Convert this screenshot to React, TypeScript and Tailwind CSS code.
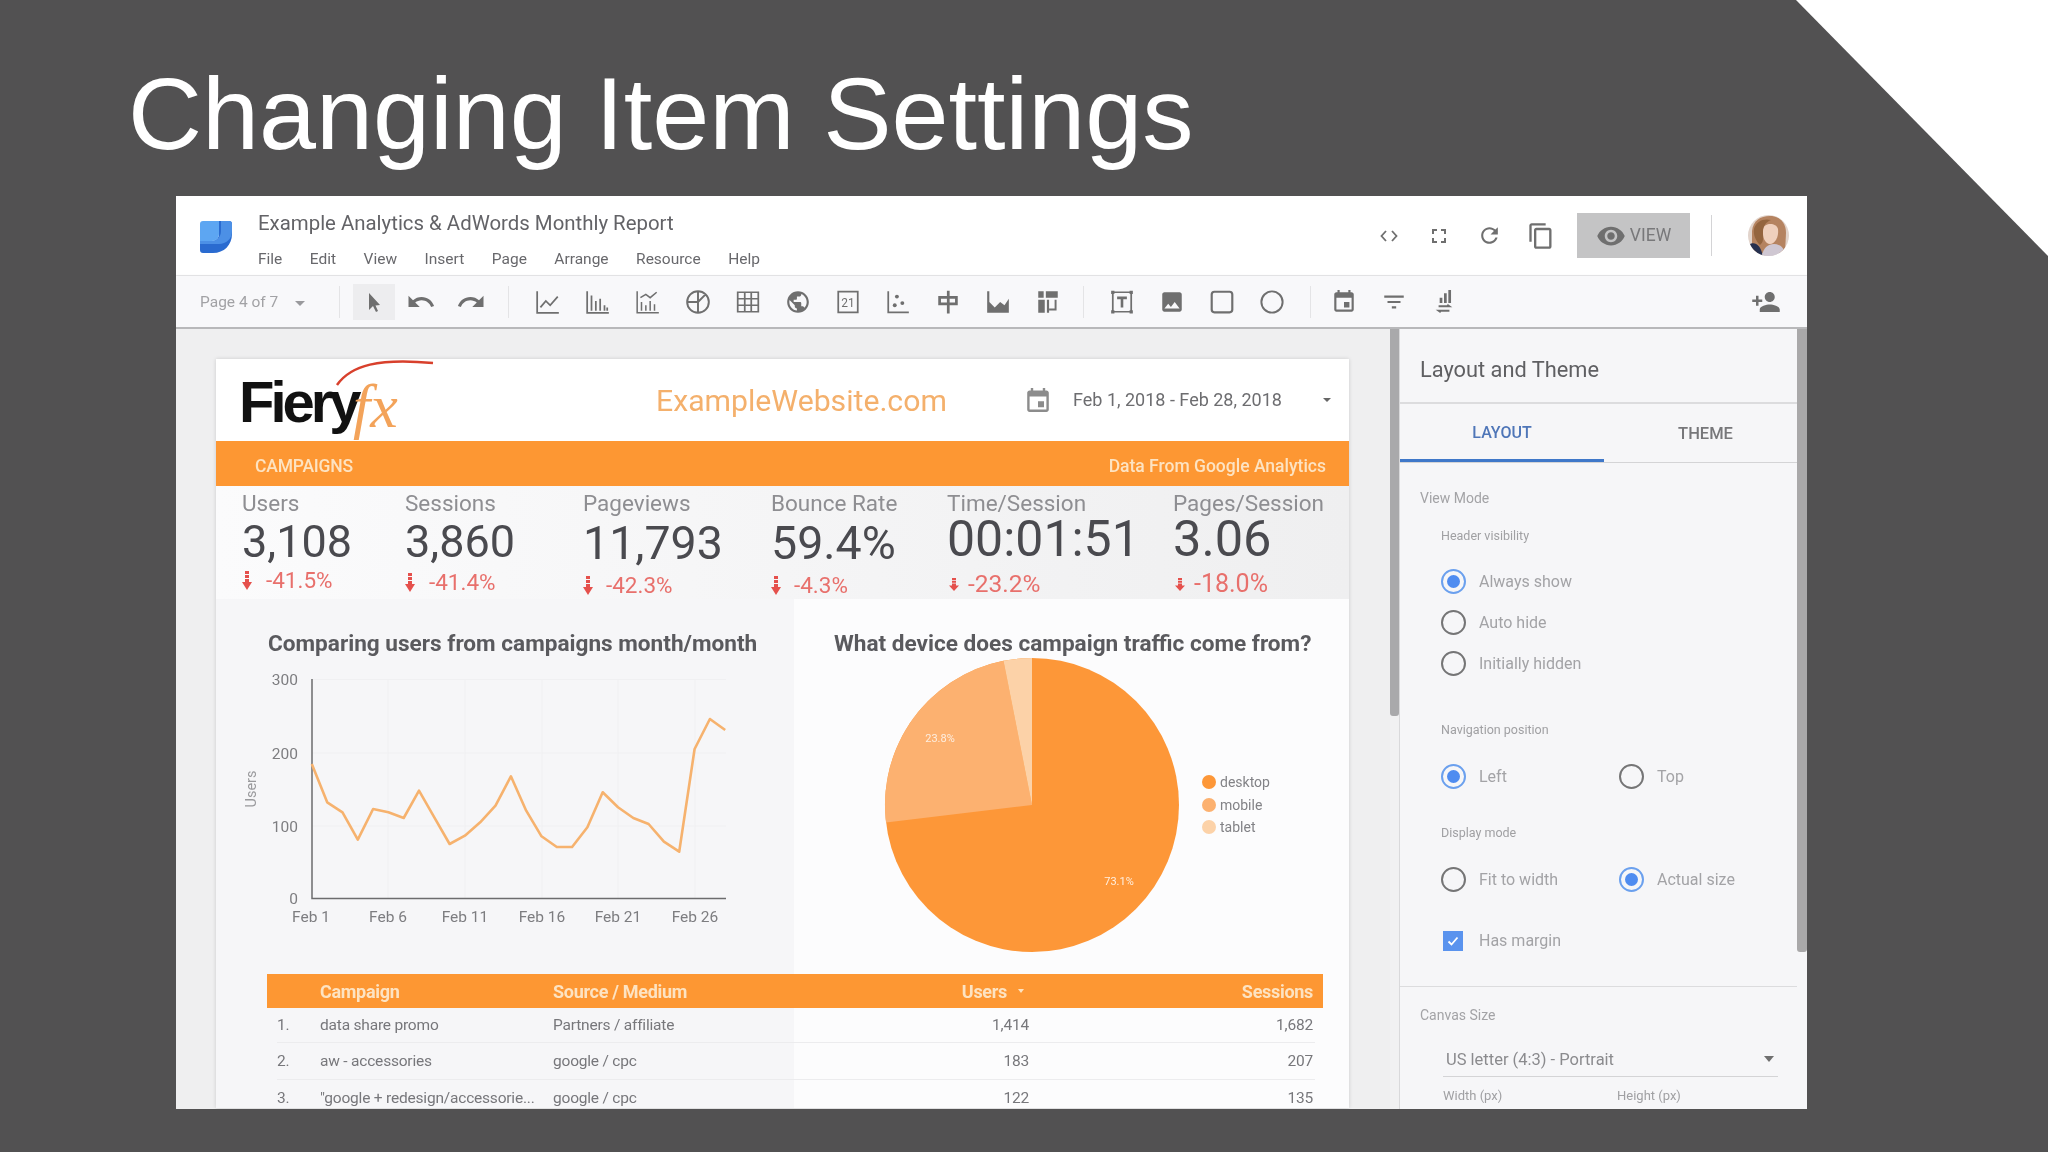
import type { ReactNode } from 'react';

const linePoints = [
  [240, 435], [280, 550], [320, 580], [360, 662], [400, 570], [440, 580], [480, 597], [520, 515],
  [560, 595], [600, 675], [640, 650], [680, 610], [720, 560], [760, 472], [800, 575], [840, 652],
  [880, 684], [920, 684], [960, 625], [1000, 520], [1040, 565], [1080, 597], [1120, 615], [1160, 668],
  [1200, 698], [1240, 390], [1280, 300], [1320, 333],
]
  .map(([x, y]) => `${(4 + x / 2.613).toFixed(1)},${(y / 3 - 39).toFixed(1)}`)
  .join(' ');

function Icon({ children, size = 26 }: { children: ReactNode; size?: number }) {
  return (
    <svg width={size} height={size} viewBox="0 0 24 24" fill="#6f6f6f" stroke="none">
      {children}
    </svg>
  );
}

function Stroke({ d, width = 1.6 }: { d: string; width?: number }) {
  return <path d={d} fill="none" stroke="#6f6f6f" strokeWidth={width} />;
}

function ToolSlot({ children }: { children: ReactNode }) {
  return <div className="flex h-[36px] w-[50px] shrink-0 items-center justify-center">{children}</div>;
}

function ToolDivider() {
  return <div className="h-[32px] w-px shrink-0 bg-[#e4e4e6]" />;
}

function Logo() {
  return (
    <svg width="34" height="34" viewBox="0 0 34 34">
      <path d="M20 1h10a3 3 0 0 1 3 3v10c0 11-8 19-19 19H4a3 3 0 0 1-3-3v-9h12c4 0 7-3 7-7z" fill="#2a6bd0" />
      <path d="M22 1h8a3 3 0 0 1 3 3v7c0 8-6 13-13 13H1v-3h11c6 0 10-4 10-10z" fill="#4c90e6" />
      <path d="M4 1h16v13c0 4-3 7-7 7H1V4a3 3 0 0 1 3-3z" fill="#5da6f2" />
    </svg>
  );
}

function Avatar() {
  return (
    <svg width="41" height="41" viewBox="0 0 41 41">
      <clipPath id="avatar-clip">
        <circle cx="20.5" cy="20.5" r="20.5" />
      </clipPath>
      <g clipPath="url(#avatar-clip)">
        <rect width="41" height="41" fill="#e2d4cc" />
        <path d="M4 38V16C5 6 12 1 22 1c10 0 16 7 16 17l-1 20z" fill="#b58360" />
        <path d="M0 30c6-4 12-2 15 11H0z" fill="#26304f" />
        <path d="M15 14c1-6 13-7 15 0 1 8-3 15-8 15s-8-7-7-15z" fill="#efd0bd" />
        <path d="M14 41c1-8 6-12 12-12s11 4 11 12z" fill="#cfc7d2" />
        <path d="M6 14c2-8 10-11 17-9-5 2-8 6-8 12 0 6 1 10-3 13-4-4-7-10-6-16z" fill="#94653f" />
      </g>
    </svg>
  );
}

function DownArrow({ small = false }: { small?: boolean }) {
  return (
    <svg width="10" height={small ? 13 : 19} viewBox="0 0 10 19" preserveAspectRatio="none" className="shrink-0">
      <path d="M3 0h4v3H3zM3 4h4v3H3zM3 8h4v3h3l-5 8-5-8h3z" fill="#e5504c" />
    </svg>
  );
}

const kpis = [
  { label: 'Users', value: '3,108', delta: '-41.5%', box: 'w-[163px]', val: 'text-[45px] leading-[50px] mt-[1px]', del: 'mt-[1px] gap-[14px] text-[22.5px]', small: false },
  { label: 'Sessions', value: '3,860', delta: '-41.4%', box: 'w-[178px]', val: 'text-[45px] leading-[50px] mt-[1px]', del: 'mt-[3px] gap-[14px] text-[22.5px]', small: false },
  { label: 'Pageviews', value: '11,793', delta: '-42.3%', box: 'w-[188px]', val: 'text-[46.5px] leading-[50px] mt-[2px]', del: 'mt-[5px] gap-[13px] text-[22.5px]', small: false },
  { label: 'Bounce Rate', value: '59.4%', delta: '-4.3%', box: 'w-[176px]', val: 'text-[46.5px] leading-[50px] mt-[2px]', del: 'mt-[5px] gap-[13px] text-[22.5px]', small: false },
  { label: 'Time/Session', value: '00:01:51', delta: '-23.2%', box: 'w-[226px]', val: 'text-[50px] leading-[50px] -mt-[2px]', del: 'mt-[8px] gap-[9px] text-[24.5px] pl-[2px]', small: true },
  { label: 'Pages/Session', value: '3.06', delta: '-18.0%', box: 'w-[170px]', val: 'text-[50.5px] leading-[50px] -mt-[2px]', del: 'mt-[8px] gap-[9px] text-[25px] pl-[2px]', small: true },
];

const rows = [
  ['1.', 'data share promo', 'Partners / affiliate', '1,414', '1,682'],
  ['2.', 'aw - accessories', 'google / cpc', '183', '207'],
  ['3.', '"google + redesign/accessorie...', 'google / cpc', '122', '135'],
];

function Kpi({ k }: { k: (typeof kpis)[number] }) {
  return (
    <div className={`flex shrink-0 flex-col ${k.box}`}>
      <div className="text-[22.5px] leading-[26px] text-[#8e8e92]">{k.label}</div>
      <div className={`text-[#4a4a4f] ${k.val}`}>{k.value}</div>
      <div className={`flex items-center leading-[24px] text-[#e8706c] ${k.del}`}>
        <DownArrow small={k.small} />
        {k.delta}
      </div>
    </div>
  );
}

function Report() {
  return (
    <div className="h-[749px] w-[1133px] shrink-0 overflow-hidden bg-white shadow-[0_0_4px_rgba(0,0,0,0.15)]">
      <div className="flex h-[82px] items-center">
        <div className="relative mt-[3px] ml-[23px] w-[417px]">
          <span className="font-[family-name:'Liberation_Sans',Arial,sans-serif] text-[58px] leading-[60px] font-bold tracking-[-4px] text-[#111]">
            Fiery
          </span>
          <span className="absolute top-[4px] left-[114px] font-[family-name:'Liberation_Serif',serif] text-[62px] leading-[60px] text-[#f3a35a] italic">
            fx
          </span>
          <svg width="110" height="30" viewBox="0 0 110 30" className="absolute -top-[15px] left-[96px]">
            <path d="M2 28C16 8 44 1 98 6" fill="none" stroke="#d8402c" strokeWidth="2.5" />
          </svg>
        </div>
        <div className="mt-[2px] w-[370px] text-[30.2px] leading-[40px] text-[#f4b06c]">ExampleWebsite.com</div>
        <svg width="22" height="24" viewBox="3 1 18 20" className="ml-[1px] shrink-0">
          <path
            d="M17 12h-5v5h5v-5zM16 1v2H8V1H6v2H5c-1.11 0-1.99.9-1.99 2L3 19c0 1.1.89 2 2 2h14c1.1 0 2-.9 2-2V5c0-1.1-.9-2-2-2h-1V1h-2zm3 18H5V8h14v11z"
            fill="#8c8c8c"
          />
        </svg>
        <div className="ml-[24px] w-[250px] text-[18px] leading-[24px] text-[#6d6d70]">Feb 1, 2018 - Feb 28, 2018</div>
        <div className="h-0 w-0 border-x-[4px] border-t-[4px] border-x-transparent border-t-[#666]" />
      </div>
      <div className="flex h-[45px] items-center justify-between bg-[#fd9733] pt-[5px] pr-[23px] pl-[39px] text-[17.5px] font-medium text-[#fde3c2]">
        <span className="tracking-[-0.2px]">CAMPAIGNS</span>
        <span>Data From Google Analytics</span>
      </div>
      <div className="flex h-[113px] bg-[linear-gradient(to_right,#fbfbfc,#efeff0)] pt-[4px] pl-[26px]">
        {kpis.map((k) => (
          <Kpi key={k.label} k={k} />
        ))}
      </div>
      <div className="bg-[linear-gradient(to_right,#f6f6f8_578px,#fcfcfd_578px)]">
        <div className="flex h-[375px]">
          <div className="w-[578px] shrink-0">
            <div className="h-[59px] pt-[31px] pl-[52px] text-[22.6px] leading-[28px] font-bold text-[#5a5a5e]">
              Comparing users from campaigns month/month
            </div>
            <svg width="578" height="316" viewBox="0 0 578 316" fontFamily="Roboto, sans-serif" fontSize="15.5" fill="#7d7d80">
              <g stroke="#f0f0f2" strokeWidth="1">
                <path d="M96 21.5H510M96 95H510M96 168H510" />
                <path d="M172 21V240M249 21V240M326 21V240M402 21V240M479 21V240" />
              </g>
              <path d="M96 21V240.500H510" fill="none" stroke="#6c6c6e" strokeWidth="1.5" />
              <polyline points={linePoints} fill="none" stroke="#f6b26e" strokeWidth="2.6" strokeLinejoin="round" />
              <g textAnchor="end">
                <text x="82" y="27">300</text>
                <text x="82" y="101">200</text>
                <text x="82" y="174">100</text>
                <text x="82" y="246">0</text>
              </g>
              <g textAnchor="middle">
                <text x="95" y="264">Feb 1</text>
                <text x="172" y="264">Feb 6</text>
                <text x="249" y="264">Feb 11</text>
                <text x="326" y="264">Feb 16</text>
                <text x="402" y="264">Feb 21</text>
                <text x="479" y="264">Feb 26</text>
                <text transform="translate(40 131) rotate(-90)" fontSize="14.5" fill="#9a9a9d">Users</text>
              </g>
            </svg>
          </div>
          <div className="flex-1">
            <div className="h-[59px] pt-[31px] pl-[40px] text-[22.6px] leading-[28px] font-bold text-[#5a5a5e]">
              What device does campaign traffic come from?
            </div>
            <svg width="555" height="316" viewBox="0 0 555 316" fontFamily="Roboto, sans-serif">
              <circle cx="238" cy="147" r="147" fill="#fd9738" />
              <path d="M238 147L92 164.500A147 147 0 0 1 209.500 2.800Z" fill="#fcb170" />
              <path d="M238 147L209.500 2.800A147 147 0 0 1 238 0Z" fill="#fcd2a8" />
              <text x="146" y="84" textAnchor="middle" fontSize="11" fill="#fdeee0">23.8%</text>
              <text x="325" y="227" textAnchor="middle" fontSize="11" fill="#feefe0">73.1%</text>
              <circle cx="415" cy="124" r="7" fill="#fd9738" />
              <circle cx="415" cy="147" r="7" fill="#fcb170" />
              <circle cx="415" cy="169" r="7" fill="#fcd2a8" />
              <g fontSize="14" fill="#828286">
                <text x="426" y="129">desktop</text>
                <text x="426" y="152">mobile</text>
                <text x="426" y="174">tablet</text>
              </g>
            </svg>
          </div>
        </div>
        <div className="ml-[51px] w-[1056px]">
          <div className="grid h-[34px] grid-cols-[53px_233px_476px_294px] items-center bg-[#fd9733] text-[18px] font-bold tracking-[-0.3px] text-[#fde3c2]">
            <span />
            <span>Campaign</span>
            <span className="flex items-center justify-between pr-[5px]">
              Source / Medium
              <span className="flex items-center gap-[11px]">
                Users
                <span className="h-0 w-0 border-x-[3px] border-t-[4px] border-x-transparent border-t-[#fde3c2]" />
              </span>
            </span>
            <span className="pr-[10px] text-right">Sessions</span>
          </div>
          {rows.map((r, i) => (
            <div key={r[0]}>
              <div
                className={`grid grid-cols-[53px_233px_476px_294px] items-center pt-[1px] text-[15.5px] tracking-[-0.2px] text-[#77777b] ${
                  i === 0 ? 'h-[34px]' : 'h-[36px]'
                }`}
              >
                <span className="pl-[10px]">{r[0]}</span>
                <span className="truncate">{r[1]}</span>
                <span className="flex justify-between">
                  {r[2]}
                  <span>{r[3]}</span>
                </span>
                <span className="pr-[10px] text-right">{r[4]}</span>
              </div>
              <div className="mr-[8px] ml-[10px] h-px bg-[#ececee]" />
            </div>
          ))}
        </div>
      </div>
    </div>
  );
}

function Radio({ label, on = false }: { label: string; on?: boolean }) {
  return (
    <div className="flex h-[41px] items-center gap-[13px] text-[16px] text-[#a3a3a6]">
      <div
        className={`flex h-[25px] w-[25px] shrink-0 items-center justify-center rounded-full border-[2.5px] ${
          on ? 'border-[#6ba0ee]' : 'border-[#757576]'
        }`}
      >
        {on && <div className="h-[13px] w-[13px] rounded-full bg-[#4f8cf0]" />}
      </div>
      {label}
    </div>
  );
}

function Panel() {
  return (
    <div className="w-[398px] shrink-0 border-l border-[#d9d9db] bg-[#f6f6f8]">
      <div className="flex h-[75px] items-center border-b-2 border-[#dcdcde] pt-[10px] pl-[20px] text-[21.8px] text-[#5f5f62]">
        Layout and Theme
      </div>
      <div className="flex h-[59px] border-b border-[#d4d4d6] text-[16px] font-medium">
        <div className="flex w-[204px] items-center justify-center border-b-[3px] border-[#3f78c9] pt-[3px] text-[#4f76b8]">LAYOUT</div>
        <div className="flex flex-1 items-center justify-center pt-[3px] pl-[10px] text-[16.5px] text-[#77777a]">THEME</div>
      </div>
      <div className="pt-[25px]">
        <div className="pl-[20px] text-[14px] leading-[20px] text-[#a3a3a6]">View Mode</div>
        <div className="pl-[41px]">
          <div className="mt-[20px] text-[12.5px] leading-[16px] text-[#a0a0a3]">Header visibility</div>
          <div className="mt-[17px]">
            <Radio label="Always show" on />
            <Radio label="Auto hide" />
            <Radio label="Initially hidden" />
          </div>
          <div className="mt-[38px] text-[12.5px] leading-[16px] text-[#a0a0a3]">Navigation position</div>
          <div className="mt-[18px] grid grid-cols-[178px_1fr]">
            <Radio label="Left" on />
            <Radio label="Top" />
          </div>
          <div className="mt-[28px] text-[12.5px] leading-[16px] text-[#a0a0a3]">Display mode</div>
          <div className="mt-[18px] grid grid-cols-[178px_1fr]">
            <Radio label="Fit to width" />
            <Radio label="Actual size" on />
          </div>
          <div className="mt-[26px] flex h-[30px] items-center gap-[16px] pl-[2px] text-[16px] text-[#a3a3a6]">
            <div className="flex h-[20px] w-[20px] items-center justify-center bg-[#5a93ee]">
              <svg width="14" height="14" viewBox="0 0 14 14">
                <path d="M2.500 7.500L5.500 10.500L11.500 3.500" fill="none" stroke="#fff" strokeWidth="1.8" />
              </svg>
            </div>
            Has margin
          </div>
        </div>
        <div className="mt-[30px] h-px bg-[#dcdcde]" />
        <div className="mt-[18px] pl-[20px] text-[14px] leading-[20px] text-[#a3a3a6]">Canvas Size</div>
        <div className="mt-[20px] mr-[19px] ml-[43px] flex h-[32px] items-center justify-between border-b border-[#d4d4d6] pr-[4px] pl-[3px] text-[16.500px] text-[#8b8b8e]">
          US letter (4:3) - Portrait
          <span className="mb-[4px] h-0 w-0 border-x-[5px] border-t-[6px] border-x-transparent border-t-[#6f6f6f]" />
        </div>
        <div className="mt-[11px] ml-[43px] grid grid-cols-[174px_1fr] text-[13px] leading-[16px] text-[#a0a0a3]">
          <span>Width (px)</span>
          <span>Height (px)</span>
        </div>
      </div>
    </div>
  );
}

function AppWindow() {
  return (
    <div className="ml-[176px] h-[913px] w-[1631px] overflow-hidden bg-white font-[family-name:Roboto,sans-serif] blur-[0.7px]">
      <div className="flex h-[80px] border-b border-[#eaeaec]">
        <div className="ml-[23px] pt-[24px]">
          <Logo />
        </div>
        <div className="ml-[25px] flex flex-col">
          <div className="pt-[14px] text-[20.4px] leading-[26px] text-[#636367]">Example Analytics &amp; AdWords Monthly Report</div>
          <div className="mt-[13px] flex gap-[27.5px] text-[15.500px] leading-[20px] text-[#68686c]">
            <span>File</span>
            <span>Edit</span>
            <span>View</span>
            <span>Insert</span>
            <span>Page</span>
            <span>Arrange</span>
            <span>Resource</span>
            <span>Help</span>
          </div>
        </div>
        <div className="ml-auto flex items-center pr-[18px]">
          <ToolSlot>
            <Icon size={24}>
              <Stroke d="M9 7L4.500 12L9 17M15 7L19.500 12L15 17" width={1.8} />
            </Icon>
          </ToolSlot>
          <ToolSlot>
            <Icon size={24}>
              <path d="M7 14H5v5h5v-2H7v-3zm-2-4h2V7h3V5H5v5zm12 7h-3v2h5v-5h-2v3zM14 5v2h3v3h2V5h-5z" />
            </Icon>
          </ToolSlot>
          <ToolSlot>
            <Icon size={25}>
              <path d="M17.650 6.350C16.200 4.900 14.210 4 12 4c-4.420 0-7.990 3.580-7.990 8s3.570 8 7.990 8c3.730 0 6.840-2.550 7.730-6h-2.080c-.820 2.330-3.040 4-5.650 4-3.310 0-6-2.690-6-6s2.690-6 6-6c1.660 0 3.140.690 4.220 1.780L13 11h7V4l-2.350 2.350z" />
            </Icon>
          </ToolSlot>
          <div className="ml-[2px]">
            <ToolSlot>
              <Icon size={28}>
                <path d="M16 1H4c-1.100 0-2 .900-2 2v14h2V3h12V1zm3 4H8c-1.100 0-2 .900-2 2v14c0 1.100.900 2 2 2h11c1.100 0 2-.900 2-2V7c0-1.100-.900-2-2-2zm0 16H8V7h11v14z" />
              </Icon>
            </ToolSlot>
          </div>
          <div className="ml-[11px] flex h-[45px] w-[113px] items-center justify-center gap-[4px] bg-[#c4c4c5] text-[17.5px] text-[#78787a]">
            <Icon size={30}>
              <path d="M12 4.500C7 4.500 2.730 7.610 1 12c1.730 4.390 6 7.500 11 7.500s9.270-3.110 11-7.500c-1.730-4.390-6-7.500-11-7.500zM12 17c-2.760 0-5-2.240-5-5s2.240-5 5-5 5 2.240 5 5-2.240 5-5 5zm0-8c-1.660 0-3 1.340-3 3s1.340 3 3 3 3-1.340 3-3-1.340-3-3-3z" />
            </Icon>
            VIEW
          </div>
          <div className="ml-[21px] h-[41px] w-px bg-[#d4d4d6]" />
          <div className="ml-[36px]">
            <Avatar />
          </div>
        </div>
      </div>
      <div className="flex h-[53px] items-center border-b-2 border-[#b8b8ba] bg-[#f8f8fa] shadow-[0_1px_3px_rgba(0,0,0,0.2)]">
        <div className="ml-[24px] flex w-[139px] items-center pt-[3px] text-[15.500px] text-[#a2a2a5]">
          Page 4 of 7
          <span className="ml-[17px] h-0 w-0 border-x-[5px] border-t-[5px] border-x-transparent border-t-[#9a9a9d]" />
        </div>
        <ToolDivider />
        <div className="ml-[13px] flex h-[36px] w-[42px] items-center justify-center bg-[#ededef] pr-[2px]">
          <Icon size={24}>
            <path d="M8 3L8 20L12 16L15 22L17 21L14.500 15.500L19 15z" />
          </Icon>
        </div>
        <div className="ml-[1px]">
          <ToolSlot>
            <Icon size={30}>
              <path d="M12.500 8c-2.650 0-5.050.990-6.900 2.600L2 7v9h9l-3.620-3.620c1.390-1.160 3.160-1.880 5.120-1.880 3.540 0 6.550 2.310 7.600 5.500l2.370-.780C21.080 11.030 17.150 8 12.500 8z" />
            </Icon>
          </ToolSlot>
        </div>
        <ToolSlot>
          <Icon size={30}>
            <path d="M18.400 10.600C16.550 8.990 14.150 8 11.500 8c-4.650 0-8.580 3.030-9.960 7.220L3.900 16c1.050-3.190 4.050-5.500 7.600-5.500 1.950 0 3.730.720 5.120 1.880L13 16h9V7l-3.600 3.600z" />
          </Icon>
        </ToolSlot>
        <div className="ml-[12px]">
          <ToolDivider />
        </div>
        <div className="ml-[14px] flex">
          <ToolSlot>
            <Icon>
              <Stroke d="M2 2V22H22M5 17L10 11L14 15L21 7" />
            </Icon>
          </ToolSlot>
          <ToolSlot>
            <Icon>
              <Stroke d="M2 2V22H22M6 20V6M10 20V11M14 20V9M18 20V15M20.500 20V17" />
            </Icon>
          </ToolSlot>
          <ToolSlot>
            <Icon>
              <Stroke d="M2 2V22H22M6 20V12M10 20V15M14 20V11M18 20V14M5 8L10 5L14 8L20 3" width={1.4} />
            </Icon>
          </ToolSlot>
          <ToolSlot>
            <Icon>
              <Stroke d="M12 2a10 10 0 1 0 0 20a10 10 0 1 0 0-20M12 2V22M2.500 12H12L19 5" width={1.8} />
            </Icon>
          </ToolSlot>
          <ToolSlot>
            <Icon>
              <Stroke d="M2.500 3H21.500V21H2.500ZM2.500 9H21.500M2.500 15H21.500M9 3V21M15 3V21" />
            </Icon>
          </ToolSlot>
          <ToolSlot>
            <Icon>
              <path d="M12 2C6.480 2 2 6.480 2 12s4.480 10 10 10 10-4.480 10-10S17.520 2 12 2zm-1 17.930c-3.950-.490-7-3.850-7-7.930 0-.620.080-1.210.210-1.790L9 15v1c0 1.100.900 2 2 2v1.930zm6.900-2.540c-.260-.810-1-1.390-1.900-1.390h-1v-3c0-.550-.450-1-1-1H8v-2h2c.550 0 1-.450 1-1V7h2c1.100 0 2-.900 2-2v-.410c2.930 1.190 5 4.060 5 7.410 0 2.080-.800 3.970-2.100 5.390z" />
            </Icon>
          </ToolSlot>
          <ToolSlot>
            <Icon>
              <Stroke d="M3 2.500H21V21.500H3Z" />
              <text x="12" y="17" textAnchor="middle" fontSize="11" fontFamily="Roboto, sans-serif" fill="#6f6f6f">21</text>
            </Icon>
          </ToolSlot>
          <ToolSlot>
            <Icon>
              <Stroke d="M3 2V21.500H22" />
              <circle cx="11" cy="7" r="1.800" />
              <circle cx="16" cy="13" r="1.800" />
              <circle cx="9" cy="15" r="1.800" />
            </Icon>
          </ToolSlot>
          <ToolSlot>
            <Icon>
              <path d="M11 1.500H13.500V6.500H21V15H13.500V22.500H11V15H3V6.500H11ZM5.500 9V12.500H11V9ZM13.500 9V12.500H18.500V9Z" />
            </Icon>
          </ToolSlot>
          <ToolSlot>
            <Icon>
              <path d="M2 2H4V12L9 17L14 12L18 15L22 9V22H2Z" />
            </Icon>
          </ToolSlot>
          <ToolSlot>
            <Icon>
              <path d="M3 2H8V8H3ZM10 2H21V8H10ZM3 10H9V22H3ZM11 10H13V22H11Z" />
              <Stroke d="M19 10V19H13" width={1.8} />
            </Icon>
          </ToolSlot>
        </div>
        <div className="ml-[10px]">
          <ToolDivider />
        </div>
        <div className="ml-[13px] flex">
          <ToolSlot>
            <Icon>
              <Stroke d="M3.500 3H20.500V21H3.500Z" />
              <path d="M2 1.500H5V4.500H2ZM19 1.500H22V4.500H19ZM2 19.500H5V22.500H2ZM19 19.500H22V22.500H19Z" />
              <path d="M7.500 7H16.500V9.500H13.200V17H10.800V9.500H7.500Z" />
            </Icon>
          </ToolSlot>
          <ToolSlot>
            <Icon>
              <path d="M21 19V5c0-1.100-.900-2-2-2H5c-1.100 0-2 .900-2 2v14c0 1.100.900 2 2 2h14c1.100 0 2-.900 2-2zM8.500 13.500l2.500 3.010L14.500 12l4.500 6H5l3.500-4.500z" />
            </Icon>
          </ToolSlot>
          <ToolSlot>
            <Icon>
              <rect x="2.500" y="2.500" width="19" height="19" rx="2.500" fill="none" stroke="#6f6f6f" strokeWidth="2" />
            </Icon>
          </ToolSlot>
          <ToolSlot>
            <Icon>
              <circle cx="12" cy="12" r="9.800" fill="none" stroke="#6f6f6f" strokeWidth="1.800" />
            </Icon>
          </ToolSlot>
        </div>
        <div className="ml-[13px]">
          <ToolDivider />
        </div>
        <div className="ml-[8px] flex">
          <ToolSlot>
            <Icon>
              <path d="M17 12h-5v5h5v-5zM16 1v2H8V1H6v2H5c-1.110 0-1.990.900-1.990 2L3 19c0 1.100.890 2 2 2h14c1.100 0 2-.900 2-2V5c0-1.100-.900-2-2-2h-1V1h-2zm3 18H5V8h14v11z" />
            </Icon>
          </ToolSlot>
          <ToolSlot>
            <Icon>
              <path d="M10 18h4v-2h-4v2zM3 6v2h18V6H3zm3 7h12v-2H6v2z" />
            </Icon>
          </ToolSlot>
          <ToolSlot>
            <Icon>
              <path d="M16 1H18.500V13H16ZM12 4H14.500V13H12ZM8 8H10.500V13H8Z" />
              <Stroke d="M7 16H17L15 14.500M17 20H7L9 21.500" width={1.8} />
            </Icon>
          </ToolSlot>
        </div>
        <div className="ml-auto pr-[16px]">
          <ToolSlot>
            <Icon size={30}>
              <path d="M15 12c2.210 0 4-1.790 4-4s-1.790-4-4-4-4 1.790-4 4 1.790 4 4 4zm-9-2V7H4v3H1v2h3v3h2v-3h3v-2H6zm9 4c-2.670 0-8 1.340-8 4v2h16v-2c0-2.660-5.330-4-8-4z" />
            </Icon>
          </ToolSlot>
        </div>
      </div>
      <div className="flex h-[780px]">
        <div className="w-[1214px] shrink-0 overflow-hidden bg-[#efeff0] pt-[30px] pl-[40px]">
          <Report />
        </div>
        <div className="w-[9px] shrink-0 bg-[#f1f1f2]">
          <div className="h-[387px] w-full rounded-b-[3px] bg-[#a9a9ab]" />
        </div>
        <Panel />
        <div className="w-[10px] shrink-0 bg-[#f6f6f8]">
          <div className="h-[623px] w-full rounded-b-[3px] bg-[#a9a8a9]" />
        </div>
      </div>
    </div>
  );
}

export default function App() {
  return (
    <div className="relative h-[1152px] w-[2048px] overflow-hidden bg-[#525152]">
      <svg width="252" height="256" viewBox="0 0 252 256" className="absolute top-0 right-0">
        <polygon points="0,0 252,0 252,256" fill="#fff" />
      </svg>
      <div className="h-[196px] pt-[54px] pl-[128px] font-[family-name:'Liberation_Sans',Arial,sans-serif] text-[102.5px] leading-[120px] text-white">
        Changing Item Settings
      </div>
      <AppWindow />
    </div>
  );
}
